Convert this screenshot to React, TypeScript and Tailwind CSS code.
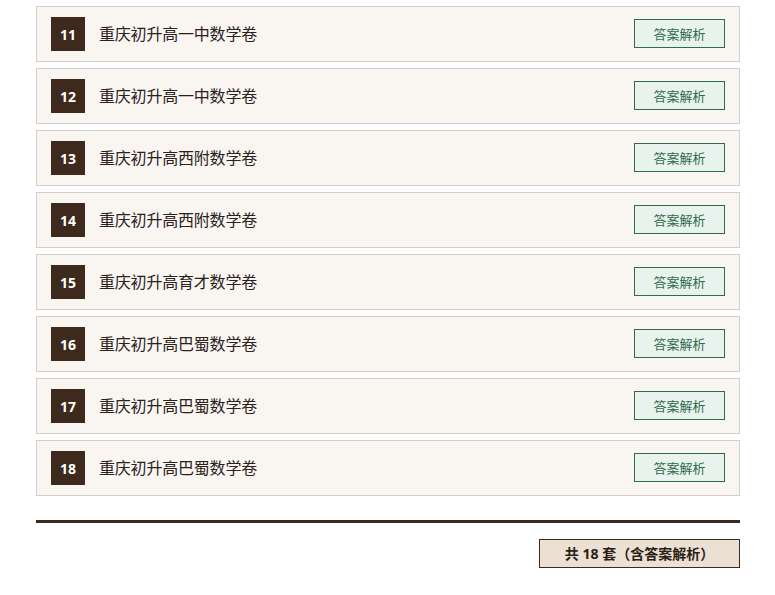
import React from "react";

type Paper = {
  id: number;
  title: string;
};

const papers: Paper[] = [
  { id: 11, title: "重庆初升高一中数学卷" },
  { id: 12, title: "重庆初升高一中数学卷" },
  { id: 13, title: "重庆初升高西附数学卷" },
  { id: 14, title: "重庆初升高西附数学卷" },
  { id: 15, title: "重庆初升高育才数学卷" },
  { id: 16, title: "重庆初升高巴蜀数学卷" },
  { id: 17, title: "重庆初升高巴蜀数学卷" },
  { id: 18, title: "重庆初升高巴蜀数学卷" },
];

const font = {
  fontFamily: '"Open Sans", "Noto Sans CJK SC", sans-serif',
};

export default function App() {
  return (
    <div className="min-h-[595px] bg-white pt-[6px]" style={font}>
      <div className="ml-[36px] w-[704px]">
        <div className="flex flex-col gap-[6px]">
          {papers.map(paper => (
            <div
              key={paper.id}
              className="flex h-[56px] items-center border border-[#d3d0cb] bg-[#f9f5f1] pl-[14px] pr-[14px]"
            >
              <div className="flex h-[34px] w-[34px] items-center justify-center bg-[#3d2a1c] text-[14px] font-bold text-white">
                {paper.id}
              </div>
              <div className="ml-[14px] text-[16px] tracking-[-0.2px] text-[#2a211b]">
                {paper.title}
              </div>
              <button className="mb-[2px] ml-auto h-[29px] w-[91px] border border-[#2f6b4c] bg-[#e9f3ed] pt-[2px] text-[13px] leading-[20px] text-[#2f6b4c]">
                答案解析
              </button>
            </div>
          ))}
        </div>
        <div className="mt-[24px] h-[3px] bg-[#3d2a1c]" />
        <div className="mt-[16px] flex justify-end">
          <div className="flex h-[29px] w-[201px] items-center justify-center border border-[#3d2a1c] bg-[#ecdfd3] text-[14px] font-bold text-[#2a1e15]">
            共 18 套（含答案解析）
          </div>
        </div>
      </div>
    </div>
  );
}
